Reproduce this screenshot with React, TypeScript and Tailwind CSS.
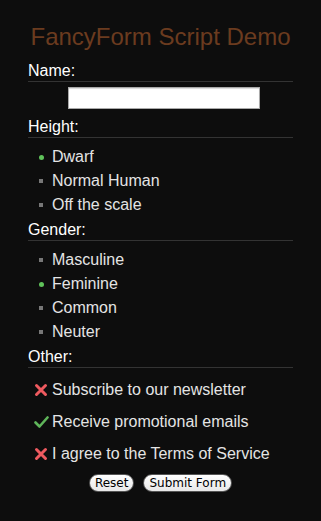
import { useState } from 'react';

const heights = ['Dwarf', 'Normal Human', 'Off the scale'];
const genders = ['Masculine', 'Feminine', 'Common', 'Neuter'];

function SectionHeader({ label }: { label: string }) {
  return (
    <div className="text-[16px] leading-[18px] text-white pb-[1px] border-b border-[#333]">
      {label}
    </div>
  );
}

function RadioList({ items, value, onChange }: { items: string[]; value: string; onChange: (v: string) => void }) {
  return (
    <ul className="pt-[7px] pb-[4px]">
      {items.map((item) => (
        <li
          key={item}
          onClick={() => onChange(item)}
          className="flex items-center h-[24px] text-[16px] leading-[24px] text-[#e4e4e4] cursor-pointer"
        >
          <span className="w-[24px] flex justify-center pl-[2px]">
            {value === item ? (
              <span className="w-[5px] h-[5px] rounded-full bg-[#5fc25a]" />
            ) : (
              <span className="w-[4px] h-[4px] bg-[#777]" />
            )}
          </span>
          {item}
        </li>
      ))}
    </ul>
  );
}

function CrossIcon() {
  return (
    <svg width="14" height="14" viewBox="0 0 14 14">
      <path d="M2.5 2.5 L11.5 11.5 M11.5 2.5 L2.5 11.5" stroke="#ee5a5f" strokeWidth="3" strokeLinecap="round" />
    </svg>
  );
}

function CheckIcon() {
  return (
    <svg width="15" height="14" viewBox="0 0 15 14">
      <path d="M1.5 7.5 L5.5 11.5 L13.5 2.5" stroke="#5fb55a" strokeWidth="2.6" fill="none" strokeLinecap="round" strokeLinejoin="round" />
    </svg>
  );
}

export default function App() {
  const [height, setHeight] = useState('Dwarf');
  const [gender, setGender] = useState('Feminine');
  const [other, setOther] = useState({ newsletter: false, promo: true, terms: false });

  const checks: { key: keyof typeof other; label: string }[] = [
    { key: 'newsletter', label: 'Subscribe to our newsletter' },
    { key: 'promo', label: 'Receive promotional emails' },
    { key: 'terms', label: 'I agree to the Terms of Service' },
  ];

  return (
    <div className="w-[321px] h-[521px] bg-[#0d0d0d] px-[28px] pt-[23px]" style={{ fontFamily: '"Liberation Sans", Arial, sans-serif' }}>
      <h1 className="text-center text-[24px] leading-[28px] text-[#6b3b1f] mb-[11px]">FancyForm Script Demo</h1>

      <SectionHeader label="Name:" />
      <div className="pt-[5px] pb-[9px]">
        <input
          type="text"
          className="block ml-[40px] w-[192px] h-[22px] bg-white border border-[#a9a9a9] shadow-[inset_0_1px_1px_rgba(0,0,0,0.15)] outline-none px-1 text-[13px]"
        />
      </div>

      <SectionHeader label="Height:" />
      <RadioList items={heights} value={height} onChange={setHeight} />

      <SectionHeader label="Gender:" />
      <RadioList items={genders} value={gender} onChange={setGender} />

      <SectionHeader label="Other:" />
      <ul className="pt-[6px]">
        {checks.map((c) => (
          <li
            key={c.key}
            onClick={() => setOther({ ...other, [c.key]: !other[c.key] })}
            className="flex items-center h-[32px] text-[16px] leading-[32px] text-[#e4e4e4] cursor-pointer"
          >
            <span className="w-[24px] flex justify-center pl-[2px]">
              {other[c.key] ? <CheckIcon /> : <CrossIcon />}
            </span>
            {c.label}
          </li>
        ))}
      </ul>

      <div className="flex justify-center gap-[9px] pt-[4px]" style={{ fontFamily: '"DejaVu Sans", sans-serif' }}>
        <button className="h-[18px] px-[5px] rounded-full bg-gradient-to-b from-white to-[#e8e8e8] border border-[#555] text-[12px] leading-[16px] text-black">
          Reset
        </button>
        <button className="h-[18px] px-[5px] rounded-full bg-gradient-to-b from-white to-[#e8e8e8] border border-[#555] text-[12px] leading-[16px] text-black">
          Submit Form
        </button>
      </div>
    </div>
  );
}
